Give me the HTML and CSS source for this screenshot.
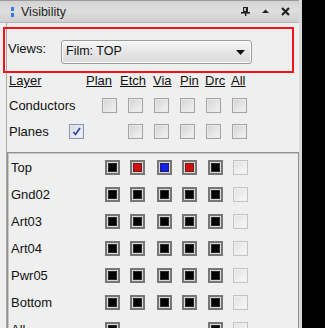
FILE: index.html
```html
<!DOCTYPE html>
<html>
<head>
<meta charset="utf-8">
<link rel="stylesheet" href="styles.css">
</head>
<body>
<div class="panel">
  <div class="titlebar">
    <svg class="grip" width="4" height="10" viewBox="0 0 4 10"><rect x="0" y="0" width="3" height="4" fill="#3a7be0"/><rect x="0" y="6" width="3" height="4" fill="#3a7be0"/></svg>
    <span class="title">Visibility</span>
    <span class="tools">
      <svg width="9" height="9" viewBox="0 0 9 9"><rect x="2" y="0" width="5" height="5" fill="#222"/><rect x="3" y="1" width="2" height="3" fill="#bbb"/><rect x="0" y="5" width="9" height="1.6" fill="#222"/><rect x="4" y="6" width="1.4" height="3" fill="#222"/></svg>
      <svg width="7" height="5" viewBox="0 0 7 5"><polygon points="0,4 7,4 3.5,0.5" fill="#222"/></svg>
      <svg width="9" height="9" viewBox="0 0 9 9"><path d="M1 1 L8 8 M8 1 L1 8" stroke="#222" stroke-width="2.2"/></svg>
    </span>
  </div>
  <div class="content">
    <div class="views">
      <span class="views-label">Views:</span>
      <div class="select">
        <span>Film: TOP</span>
        <svg width="9" height="5" viewBox="0 0 9 5"><polygon points="0,0 9,0 4.5,5" fill="#111"/></svg>
      </div>
    </div>
    <div class="grid head">
      <span class="u">Layer</span><span class="u">Plan</span><span class="u">Etch</span><span class="u">Via</span><span class="u">Pin</span><span class="u">Drc</span><span class="u">All</span>
    </div>
    <div class="grid upper">
      <span>Conductors</span>
      <span class="cb"></span><span class="cb"></span><span class="cb"></span><span class="cb"></span><span class="cb"></span><span class="cb"></span>
    </div>
    <div class="grid upper">
      <span class="planes">Planes <span class="cb checked"><svg width="11" height="11" viewBox="0 0 11 11"><path d="M2.5 6 L4.5 8.5 L9 2" stroke="#2a3fa8" stroke-width="1.6" fill="none"/></svg></span></span>
      <span></span><span class="cb"></span><span class="cb"></span><span class="cb"></span><span class="cb"></span><span class="cb"></span>
    </div>
    <div class="layers">
      <div class="row"><span class="lbl">Top</span><span class="cc"><i class="k"></i></span><span class="cc"><i class="r"></i></span><span class="cc"><i class="b"></i></span><span class="cc"><i class="r"></i></span><span class="cc"><i class="k"></i></span><span class="dis"></span></div>
      <div class="row"><span class="lbl">Gnd02</span><span class="cc"><i class="k"></i></span><span class="cc"><i class="k"></i></span><span class="cc"><i class="k"></i></span><span class="cc"><i class="k"></i></span><span class="cc"><i class="k"></i></span><span class="dis"></span></div>
      <div class="row"><span class="lbl">Art03</span><span class="cc"><i class="k"></i></span><span class="cc"><i class="k"></i></span><span class="cc"><i class="k"></i></span><span class="cc"><i class="k"></i></span><span class="cc"><i class="k"></i></span><span class="dis"></span></div>
      <div class="row"><span class="lbl">Art04</span><span class="cc"><i class="k"></i></span><span class="cc"><i class="k"></i></span><span class="cc"><i class="k"></i></span><span class="cc"><i class="k"></i></span><span class="cc"><i class="k"></i></span><span class="dis"></span></div>
      <div class="row"><span class="lbl">Pwr05</span><span class="cc"><i class="k"></i></span><span class="cc"><i class="k"></i></span><span class="cc"><i class="k"></i></span><span class="cc"><i class="k"></i></span><span class="cc"><i class="k"></i></span><span class="dis"></span></div>
      <div class="row"><span class="lbl">Bottom</span><span class="cc"><i class="k"></i></span><span class="cc"><i class="k"></i></span><span class="cc"><i class="k"></i></span><span class="cc"><i class="k"></i></span><span class="cc"><i class="k"></i></span><span class="dis"></span></div>
      <div class="row"><span class="lbl">All</span><span class="cc"><i class="k"></i></span><span></span><span></span><span></span><span class="cc"><i class="k"></i></span><span class="dis"></span></div>
    </div>
  </div>
</div>
</body>
</html>
```

FILE: styles.css
```css
* { box-sizing: border-box; }
html, body { margin: 0; padding: 0; }
body {
  background: #000;
  width: 325px;
  height: 328px;
  overflow: hidden;
  font-family: "Liberation Sans", Arial, sans-serif;
  font-size: 13px;
  color: #111;
}
.panel {
  width: 302px;
  height: 328px;
  background: #efefef;
  border-right: 3px solid #d9d9d9;
  overflow: hidden;
}
.titlebar {
  height: 23px;
  display: flex;
  align-items: center;
  border-top: 1px solid #9a9a9a;
  border-bottom: 1px solid #b4b4b4;
  background: linear-gradient(#d2d2d2, #dedede 45%, #d0d0d0);
  padding-left: 11px;
}
.grip { margin-right: 6px; margin-top: 1px; }
.title { font-size: 12.5px; color: #222; }
.tools {
  margin-left: auto;
  margin-right: 9px;
  display: flex;
  align-items: center;
  gap: 12px;
}
.content {
  margin-left: 6px;
  border-left: 1px solid #a9a9a9;
  padding-top: 4px;
  height: 310px;
}
.views {
  margin-left: -4px;
  width: 291px;
  height: 46px;
  border: 2px solid #f0141a;
  display: flex;
  align-items: flex-start;
  padding: 11px 0 0 3px;
}
.views-label { width: 53px; line-height: 18px; }
.select {
  width: 191px;
  height: 24px;
  border: 1px solid #9c9c9c;
  border-radius: 3px;
  background: linear-gradient(#f6f6f6, #e6e6e6 50%, #dadada);
  display: flex;
  align-items: center;
  justify-content: space-between;
  padding: 0 6px 3px 4px;
  font-size: 12.5px;
  box-shadow: inset 0 0 0 1px #fbfbfb;
}
.select svg { margin-top: 3px; }
.grid { display: grid; align-items: center; padding-left: 2px; }
.head {
  grid-template-columns: 77px 34px 33px 27px 25px 26px auto;
  height: 19px;
  line-height: 16px;
  padding-bottom: 3px;
}
.u { text-decoration: underline; }
.upper {
  grid-template-columns: 93px repeat(6, 26px);
  height: 26px;
}
.planes { display: flex; align-items: center; gap: 20px; }
.cb {
  width: 15px;
  height: 15px;
  border: 1px solid #a4a4a4;
  background: linear-gradient(135deg, #d4d4d4, #f4f4f4);
  box-shadow: inset 0 0 0 1px #e8e8e8;
  display: block;
}
.cb.checked {
  border-color: #8b93b4;
  background: linear-gradient(135deg, #d6d8e2, #f4f4f8);
  display: flex;
  align-items: center;
  justify-content: center;
}
.layers {
  margin-top: 8px;
  width: 292px;
  height: 180px;
  border: 1px solid #8f8f8f;
  box-shadow: inset 1px 1px 0 #c8c8c8;
  padding-top: 1px;
}
.row {
  display: grid;
  grid-template-columns: 97px 25px 27px 25px 26px 25px 26px;
  align-items: center;
  height: 27px;
}
.lbl { padding-left: 3px; }
.cc {
  width: 15px;
  height: 15px;
  border: 2px solid #767676;
  background: #d8d8d8;
  padding: 1px;
  display: block;
}
.cc i {
  display: block;
  width: 9px;
  height: 9px;
  border: 1px solid #2a2a2a;
}
.cc i.k { background: #000; }
.cc i.r { background: #d01010; border-color: #6a2020; }
.cc i.b { background: #1020e8; border-color: #20206a; }
.dis {
  width: 15px;
  height: 15px;
  border: 1px solid #c4c4c4;
  background: linear-gradient(135deg, #e0e0e0, #fafafa);
  box-shadow: inset 0 0 0 1px #efefef;
  display: block;
}
```
